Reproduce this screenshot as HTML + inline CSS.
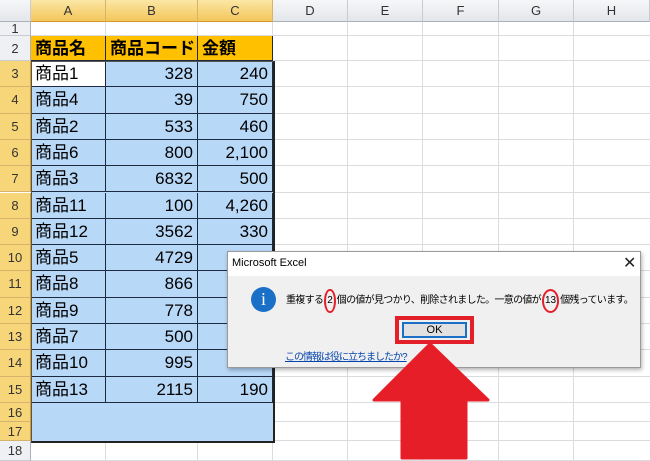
<!DOCTYPE html>
<html><head><meta charset="utf-8"><style>
*{margin:0;padding:0;box-sizing:border-box}
body{width:650px;height:461px;overflow:hidden;background:#fff;position:relative;font-family:"Liberation Sans","Noto Sans CJK JP",sans-serif}
.a{position:absolute}
.ch{top:0;height:22px;border-right:1px solid #c8ccd2;border-bottom:1px solid #a9b0b9;background:linear-gradient(#f6f7f9,#e3e6ea);color:#333;font-size:13px;text-align:center;line-height:22px}
.ch.s{background:linear-gradient(#fbe7a5,#f4c65a);border-right-color:#d6b36a;border-bottom-color:#d49a2a}
.rh{left:0;width:31px;border-bottom:1px solid #c8ccd2;border-right:1px solid #a9b0b9;background:#eef0f3;color:#333;font-size:13px;text-align:center}
.rh.s{background:#f7d67a;border-bottom-color:#d6b36a;border-right-color:#d49a2a}
.vl{top:22px;bottom:0;width:1px;background:#dadcdf}
.hl{left:31px;right:0;height:1px;background:#dadcdf}
.c{font-size:17px;line-height:26px;padding:0 4px;color:#000;white-space:nowrap}
.ov{display:inline-block;border:2px solid #e3202a;border-radius:50%;padding:5px 1px;line-height:10px;margin:0 1px;letter-spacing:0}
</style></head><body>
<div class="a ch" style="left:0;width:31px"></div>
<div class="a ch s" style="left:31px;width:75px">A</div>
<div class="a ch s" style="left:106px;width:92px">B</div>
<div class="a ch s" style="left:198px;width:75px">C</div>
<div class="a ch" style="left:273px;width:75px">D</div>
<div class="a ch" style="left:348px;width:75px">E</div>
<div class="a ch" style="left:423px;width:76px">F</div>
<div class="a ch" style="left:499px;width:75px">G</div>
<div class="a ch" style="left:574px;width:76px">H</div>
<div id="grid"></div>
<script>
var tops=[22,36,61];for(var i=3;i<=15;i++)tops.push(61+(i-2)*26.3);tops[15]=403;tops.push(422,441,461);
var h='';
var cols=[106,198,273,348,423,499,574];
cols.forEach(function(x){h+='<div class="a vl" style="left:'+(x-1)+'px"></div>'});
for(var r=1;r<=18;r++){var t=tops[r-1],b=tops[r];
h+='<div class="a hl" style="top:'+(b-1)+'px"></div>';
h+='<div class="a rh'+(r>=3&&r<=17?' s':'')+'" style="top:'+t+'px;height:'+(b-t)+'px;line-height:'+(b-t)+'px">'+r+'</div>';}
h+='<div class="a" style="left:31px;top:36px;width:242px;height:25px;background:#ffc000"></div>';
h+='<div class="a" style="left:31px;top:61px;width:242px;height:380px;background:#b8d8f8"></div>';
h+='<div class="a" style="left:32px;top:62px;width:74px;height:25px;background:#fff"></div>';
var data=[["商品名","商品コード","金額"],["商品1","328","240"],["商品4","39","750"],["商品2","533","460"],["商品6","800","2,100"],["商品3","6832","500"],["商品11","100","4,260"],["商品12","3562","330"],["商品5","4729",""],["商品8","866",""],["商品9","778",""],["商品7","500",""],["商品10","995",""],["商品13","2115","190"]];
var cx=[31,106,198,273],cw=[75,92,75];
data.forEach(function(row,k){var r=k+2,t=tops[r-1],b=tops[r];
for(var j=0;j<3;j++){
h+='<div class="a c" style="left:'+cx[j]+'px;top:'+t+'px;width:'+cw[j]+'px;height:'+(b-t)+'px;border-right:1px solid #1e2a40;border-bottom:1px solid #1e2a40;'+(r==2?'font-weight:bold;':'')+(j>0&&r>2?'text-align:right;':'')+'">'+row[j]+'</div>';}
});
h+='<div class="a" style="left:31px;top:61px;width:244px;height:382px;border:2px solid #222;border-top:1px solid #555;border-left:1px solid #555"></div>';
document.getElementById('grid').innerHTML=h;
</script>
<div class="a" style="left:227px;top:251px;width:414px;height:117px;background:#f0f0f0;border:1px solid #9a9a9a;box-shadow:1px 2px 4px rgba(0,0,0,.3)">
 <div class="a" style="left:0;top:0;width:412px;height:24px;background:#fff"></div>
 <div class="a" style="left:4px;top:5px;font-size:11px;color:#000">Microsoft Excel</div>
 <div class="a" style="left:395px;top:1px;font-size:16px;color:#222">✕</div>
 <div class="a" style="left:23px;top:35px;width:25px;height:25px;border-radius:50%;background:#1a6fc6;color:#fff;text-align:center;font-size:18px;line-height:25px;font-family:'Liberation Serif',serif">i</div>
 <div class="a" style="left:58px;top:37px;font-size:10px;line-height:24px;color:#000;white-space:nowrap;letter-spacing:-0.7px">重複する<span class="ov">2</span>個の値が見つかり、削除されました。一意の値が<span class="ov">13</span>個残っています。</div>
 <div class="a" style="left:167px;top:64px;width:79px;height:28px;border:4px solid #e3202a"></div>
 <div class="a" style="left:174px;top:70px;width:65px;height:16px;border:2px solid #1a6fc6;background:#e1e1e1;text-align:center;font-size:11px;line-height:12px">OK</div>
 <div class="a" style="left:57px;top:96px;font-size:10px;letter-spacing:-1px;color:#0645ad;text-decoration:underline">この情報は役に立ちましたか?</div>
</div>
<svg class="a" style="left:0;top:0" width="650" height="461"><polygon points="430,344 488,400 466,400 466,458 402,458 402,400 374,400" fill="#e61e28" stroke="#e61e28" stroke-width="3" stroke-linejoin="round"/></svg>
</body></html>
